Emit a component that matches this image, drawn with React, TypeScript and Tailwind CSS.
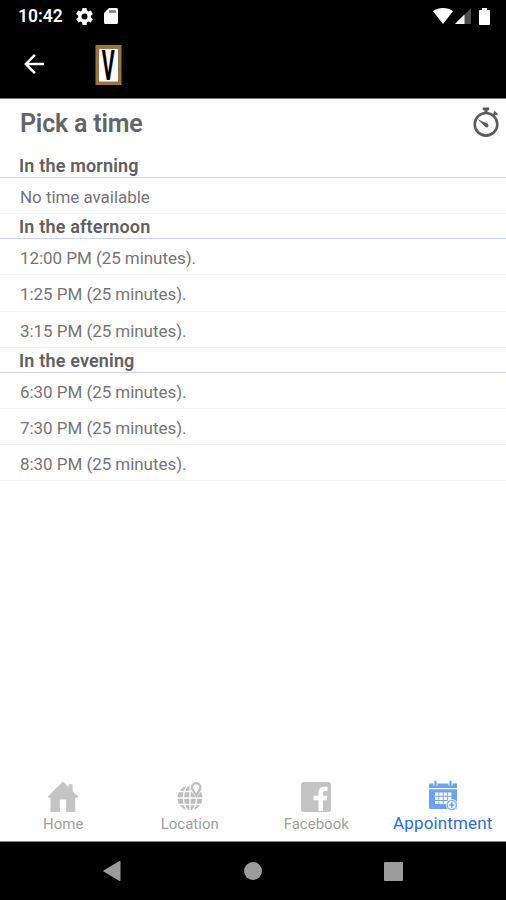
import { ReactNode, useState } from "react";
import clsx from "clsx";

type Section = {
  title: string;
  slots: string[];
};

const SECTIONS: Section[] = [
  { title: "In the morning", slots: [] },
  {
    title: "In the afternoon",
    slots: ["12:00 PM", "1:25 PM", "3:15 PM"],
  },
  { title: "In the evening", slots: ["6:30 PM", "7:30 PM", "8:30 PM"] },
];

const DURATION = 25;

function StatusBar() {
  return (
    <div className="flex h-8 items-center justify-between pl-[18px] pr-[16px] text-white">
      <div className="flex items-center">
        <span className="w-[58px] text-[17.5px] leading-8 font-semibold">10:42</span>
        <svg width="17" height="17" viewBox="2 2 20 20" fill="currentColor">
          <path d="M19.43 12.98c.04-.32.07-.64.07-.98s-.03-.66-.07-.98l2.11-1.65c.19-.15.24-.42.12-.64l-2-3.46c-.12-.22-.39-.3-.61-.22l-2.49 1c-.52-.4-1.08-.73-1.69-.98l-.38-2.65A.49.49 0 0 0 14 2h-4c-.25 0-.46.18-.49.42l-.38 2.65c-.61.25-1.17.59-1.69.98l-2.49-1c-.23-.09-.49 0-.61.22l-2 3.46c-.13.22-.07.49.12.64l2.11 1.65c-.04.32-.07.65-.07.98s.03.66.07.98l-2.11 1.65c-.19.15-.24.42-.12.64l2 3.46c.12.22.39.3.61.22l2.49-1c.52.4 1.08.73 1.69.98l.38 2.65c.03.24.24.42.49.42h4c.25 0 .46-.18.49-.42l.38-2.65c.61-.25 1.17-.59 1.69-.98l2.49 1c.23.09.49 0 .61-.22l2-3.46c.12-.22.07-.49-.12-.64l-2.11-1.65zM12 15.5a3.5 3.5 0 1 1 0-7 3.5 3.5 0 0 1 0 7z" />
        </svg>
        <svg width="14" height="16" viewBox="0 0 14 16" className="ml-[11px]">
          <path d="M5 0h7.5A1.5 1.5 0 0 1 14 1.5v13a1.5 1.5 0 0 1-1.5 1.5h-11A1.5 1.5 0 0 1 0 14.500V5z" fill="#fff" />
          <path d="M5 2.300h7v2.400H5z" fill="#777" />
        </svg>
      </div>
      <div className="flex items-center">
        <svg width="20" height="16" viewBox="0 0 20 16" fill="currentColor">
          <path d="M10 16 0 3.200C2.800 1.100 6.200 0 10 0s7.200 1.100 10 3.200z" />
        </svg>
        <svg width="16" height="16" viewBox="0 0 16 16" className="ml-[2px]">
          <path d="M0 16 16 0v16z" fill="#4d4d4d" />
          <path d="M0 16 9.5 6.5V16z" fill="#fff" />
        </svg>
        <svg width="11" height="17" viewBox="0 0 11 18" preserveAspectRatio="none" fill="currentColor" className="ml-2">
          <path d="M3 0h5v2h2a1 1 0 0 1 1 1v14a1 1 0 0 1-1 1H1a1 1 0 0 1-1-1V3a1 1 0 0 1 1-1h2z" />
        </svg>
      </div>
    </div>
  );
}

function AppBar() {
  return (
    <div className="flex h-[66px] items-center pl-[19px] text-white">
      <button aria-label="Back">
        <svg width="30" height="30" viewBox="0 0 24 24" fill="currentColor" className="-translate-y-px">
          <path d="M20 11H7.830l5.590-5.590L12 4l-8 8 8 8 1.410-1.410L7.830 13H20z" />
        </svg>
      </button>
      <svg width="27" height="40" viewBox="0 0 27 40" className="ml-[46px] overflow-visible">
        <rect x=".5" width="26" height="40" fill="#9b7440" />
        <rect x="4" y="4" width="19" height="32.500" fill="#fff" />
        <text
          transform="translate(13.200 35) scale(.46 1)"
          textAnchor="middle"
          fontSize="43"
          className="font-['Roboto'] font-bold"
          fill="#000"
        >
          V
        </text>
      </svg>
    </div>
  );
}

function TimerIcon() {
  return (
    <svg width="28" height="32" viewBox="0 0 28 32" fill="#5c5c5c">
      <circle cx="14" cy="18.300" r="11.300" fill="none" stroke="#5c5c5c" strokeWidth="2.600" />
      <path d="M10.800 1.500h6.400v2.800h-1.600V7.500h-3.200V4.300h-1.600z" />
      <path d="m20.300 8.800 1.700-1.900-.6-.7 1.300-1.300 3.300 3.200-1.400 1.300-.7-.6-1.800 1.900z" />
      <path d="m5.600 13.300 9.600 4.300a2 2 0 1 1-2.300 3z" />
    </svg>
  );
}

function HomeIcon() {
  return (
    <svg width="30" height="32" viewBox="0 0 30 32" fill="#c4c4c4">
      <path d="M15 1.500 30 16.600l-.7 1.200H27.200V32h-9V19.500h-6.400V32H2.500V17.800H.7L0 16.600z" />
      <path d="M20.800 4.300h3.800v7.200l-3.800-3.800z" />
    </svg>
  );
}

function LocationIcon() {
  return (
    <svg width="30" height="32" viewBox="0 0 30 32" fill="none">
      <circle cx="15" cy="18" r="12.500" fill="#bebebe" />
      <g stroke="#fff" strokeWidth="1.300">
        <path d="M15 4v28M2 18h26M4 11.500h22M4 24.500h22" />
        <ellipse cx="15" cy="18" rx="6.500" ry="13" />
      </g>
      <path
        d="M21.200.8a6 6 0 0 0-6 6.500c0 3.500 3.500 6.500 6 11 2.500-4.500 6-7.500 6-11a6 6 0 0 0-6-6.500z"
        fill="#fff"
      />
      <path
        d="M21.200 3.200a4.300 4.300 0 0 0-4.300 4.300c0 2.500 2.600 4.500 4.300 8 1.700-3.500 4.300-5.500 4.300-8a4.300 4.300 0 0 0-4.300-4.300z"
        fill="#fff"
        stroke="#bebebe"
        strokeWidth="2.300"
      />
    </svg>
  );
}

function FacebookIcon() {
  return (
    <svg width="30" height="32" viewBox="0 0 30 32">
      <rect y="2" width="30" height="30" rx="2.500" fill="#c4c4c4" />
      <path
        d="M17.500 31V20.300h-5v-4.500h5V13c0-4.200 2.500-6.200 6.200-6.200 1.300 0 2.200.1 2.800.2v4h-2.200c-1.900 0-2.300.9-2.300 2.300v2.500h4.500l-.6 4.500H22V31z"
        fill="#fff"
      />
    </svg>
  );
}

function CalendarIcon() {
  return (
    <svg width="30" height="32" viewBox="0 0 30 32">
      <path d="M1 3.500h28V8H1zM1 9.300h28V29H2.500A1.500 1.500 0 0 1 1 27.500z" fill="#6ba1f8" />
      <g stroke="#fff" strokeWidth="4">
        <path d="M7.500 1v4.500M22.500 1v4.500" />
      </g>
      <path d="M7.500 1.500V5M22.500 1.500V5" stroke="#6ba1f8" strokeWidth="2.200" strokeLinecap="round" />
      <path
        d="M7 12.500h3.500v3.200H7zm4.300 0h3.500v3.200h-3.500zm4.300 0h3.500v3.200h-3.500zm4.300 0h3.500v3.200h-3.500zM7 16.700h3.500v3.200H7zm4.300 0h3.500v3.200h-3.500zm4.300 0h3.500v3.200h-3.500zm4.300 0h3.500v3.200h-3.500zM7 20.900h3.500v3.200H7zm4.300 0h3.500v3.200h-3.500zm4.300 0h3.500v3.200h-3.500z"
        fill="#fff"
      />
      <circle cx="23.800" cy="25" r="6" fill="#fff" />
      <circle cx="23.800" cy="25" r="4.600" fill="#fff" stroke="#82b0fa" strokeWidth="1.500" />
      <path d="M23.800 22.300v5.400M21.100 25h5.400" stroke="#6ba1f8" strokeWidth="1.700" />
    </svg>
  );
}

const TABS: { label: string; icon: ReactNode }[] = [
  { label: "Home", icon: <HomeIcon /> },
  { label: "Location", icon: <LocationIcon /> },
  { label: "Facebook", icon: <FacebookIcon /> },
  { label: "Appointment", icon: <CalendarIcon /> },
];

function SlotRow({ children }: { children: ReactNode }) {
  return (
    <li className="h-[36.2px] border-b border-[#f3f3f3] pl-5 text-[17px] leading-[38px] tracking-[-0.05px] text-[#757575]">
      {children}
    </li>
  );
}

export default function App() {
  const [activeTab, setActiveTab] = useState("Appointment");

  return (
    <div className="flex h-screen flex-col overflow-hidden bg-white font-['Roboto',sans-serif]">
      <header className="h-[99px] shrink-0 border-b border-[#777] bg-black">
        <StatusBar />
        <AppBar />
      </header>

      <main className="flex-1">
        <div className="flex h-[54px] items-start justify-between pr-[6px] pl-5">
          <h1 className="text-[25px] leading-[49px] font-semibold tracking-[-0.2px] text-[#646464]">
            Pick a time
          </h1>
          <div className="mt-[7px]">
            <TimerIcon />
          </div>
        </div>

        {SECTIONS.map((section) => (
          <section key={section.title}>
            <h2 className="h-[25px] border-b border-[#cfd2fb] pl-[19px] text-[18px] leading-[26px] font-semibold tracking-[0.17px] text-[#606060]">
              {section.title}
            </h2>
            <ul>
              {section.slots.length === 0 ? (
                <SlotRow>No time available</SlotRow>
              ) : (
                section.slots.map((time) => (
                  <SlotRow key={time}>
                    {time} ({DURATION} minutes).
                  </SlotRow>
                ))
              )}
            </ul>
          </section>
        ))}
      </main>

      {/* Bottom tabs */}
      <nav className="grid h-[62px] shrink-0 grid-cols-4 border-b border-[#888]">
        {TABS.map(({ label, icon }) => (
          <button
            key={label}
            onClick={() => setActiveTab(label)}
            className="flex flex-col items-center"
          >
            {icon}
            <span
              className={clsx(
                label === activeTab
                  ? "text-[17px] leading-[22px] tracking-[0.15px] text-[#2a6cf0]"
                  : "text-[15px] leading-[24px] text-[#a0a0a0]"
              )}
            >
              {label}
            </span>
          </button>
        ))}
      </nav>

      {/* Android navigation keys */}
      <div className="flex h-[58px] shrink-0 items-center justify-between bg-black pr-[103px] pl-[102px]">
        <svg width="20" height="22" viewBox="0 0 20 22" fill="#9b9b9b">
          <path d="M18.500 1.500v19a.6.6 0 0 1-1 .4L1.500 11.500a.6.6 0 0 1 0-1l16-9.400a.6.6 0 0 1 1 .4z" />
        </svg>
        <span className="size-[18px] rounded-full bg-[#9b9b9b]" />
        <span className="size-[19px] rounded-[1px] bg-[#9b9b9b]" />
      </div>
    </div>
  );
}
